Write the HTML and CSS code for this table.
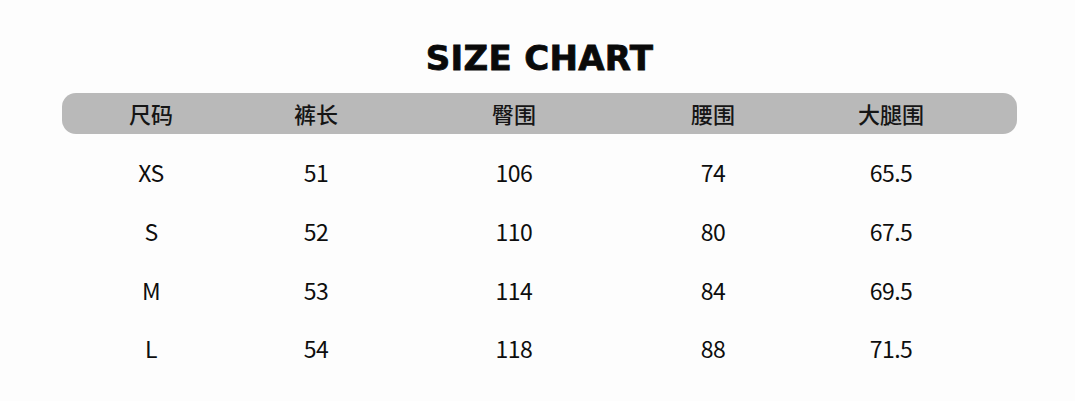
FILE: index.html
```html
<!DOCTYPE html>
<html lang="zh">
<head>
<meta charset="utf-8">
<link rel="stylesheet" href="styles.css">
</head>
<body>
<div class="page">
  <h1 class="title">SIZE CHART</h1>
  <div class="table">
    <div class="row head">
      <div class="cell">尺码</div>
      <div class="cell">裤长</div>
      <div class="cell">臀围</div>
      <div class="cell">腰围</div>
      <div class="cell">大腿围</div>
    </div>
    <div class="body">
      <div class="row">
        <div class="cell">XS</div><div class="cell">51</div><div class="cell">106</div><div class="cell">74</div><div class="cell">65.5</div>
      </div>
      <div class="row">
        <div class="cell">S</div><div class="cell">52</div><div class="cell">110</div><div class="cell">80</div><div class="cell">67.5</div>
      </div>
      <div class="row">
        <div class="cell">M</div><div class="cell">53</div><div class="cell">114</div><div class="cell">84</div><div class="cell">69.5</div>
      </div>
      <div class="row">
        <div class="cell">L</div><div class="cell">54</div><div class="cell">118</div><div class="cell">88</div><div class="cell">71.5</div>
      </div>
    </div>
  </div>
</div>
</body>
</html>
```

FILE: styles.css
```css
html, body {
  margin: 0;
  padding: 0;
  background: #fdfdfd;
}
.page {
  width: 1075px;
  height: 401px;
  padding: 38px 0 0 62px;
  box-sizing: border-box;
  font-family: "Noto Sans CJK SC", "Noto Sans", sans-serif;
  color: #111;
}
.title {
  margin: 0 0 15px 0;
  width: 955px;
  text-align: center;
  font-family: "DejaVu Sans", sans-serif;
  font-weight: 700;
  font-size: 34px;
  line-height: 40px;
  color: #0a0a0a;
  letter-spacing: 0.3px;
  -webkit-text-stroke: 0.8px #0a0a0a;
}
.table {
  width: 955px;
}
.row {
  display: grid;
  grid-template-columns: 178px 152px 244px 154px 202px;
  align-items: center;
}
.cell {
  text-align: center;
}
.head {
  height: 41px;
  background: #b9b9b9;
  border-radius: 14px;
  font-size: 22px;
  font-weight: 500;
  line-height: 37px;
  color: #151515;
}
.body {
  padding-top: 9px;
}
.body .row {
  height: 58.7px;
  font-size: 23px;
  letter-spacing: -0.5px;
  color: #0e0e0e;
}
```
